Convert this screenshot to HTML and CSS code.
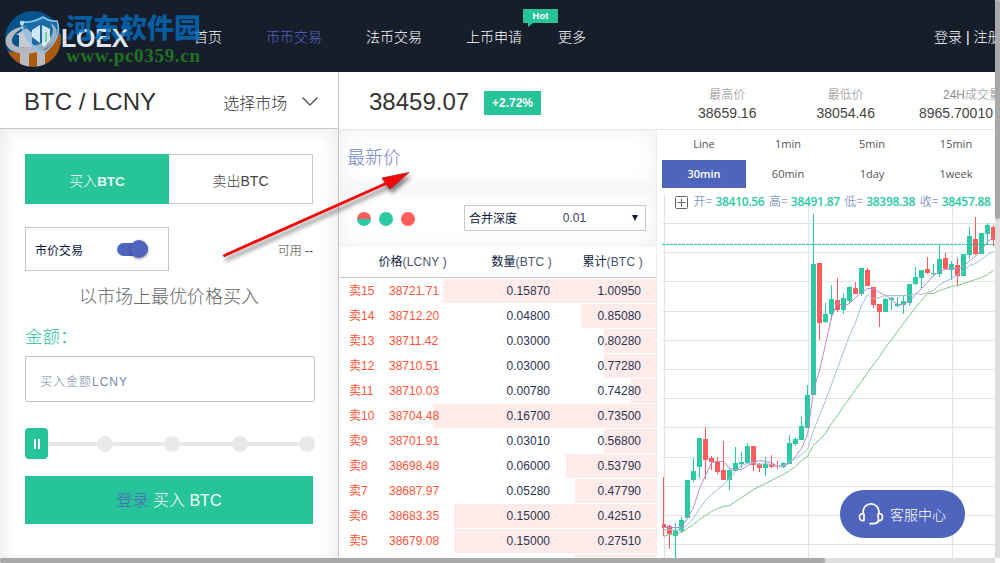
FILE: index.html
```html
<!DOCTYPE html>
<html lang="zh-CN">
<head>
    <meta charset="UTF-8">
    <meta name="viewport" content="width=device-width, initial-scale=1.0">
    <title>BTC / LCNY - LOEX</title>
    <link rel="stylesheet" href="styles.css">
</head>
<body>
    <header class="topbar">
        <div class="logo">
            <svg class="logo-mark" width="60" height="62" viewBox="0 0 60 62">
                <defs>
                    <clipPath id="disc"><circle cx="29" cy="33" r="28"/></clipPath>
                </defs>
                <g clip-path="url(#disc)">
                    <rect width="60" height="62" fill="#07538d"/>
                    <path d="M0 44 Q30 54 60 24 V62 H0 Z" fill="#ab5a10"/>
                    <path d="M16 44h9v18h-9zM33 44h8v18h-8z" fill="#b9bbc0"/>
                </g>
                <path d="M23 20 C6 21 -2 32 3 40 C9 50 30 50 42 42 C54 34 57 22 46 17 C52 24 48 32 40 36 C28 42 13 43 9 38 C5 32 13 24 23 20 Z" fill="#b4b8be"/>
                <path d="M12 29 L22 22 L31 29 H28 V41 H15 V29 Z" fill="#c6cbd2"/>
                <path d="M17 16 Q30 17 39 11 Q46 16 53 15 Q59 31 40 47 Q21 38 17 16 Z" fill="#4ba3df" fill-opacity=".3" stroke="#86c4f0" stroke-width="1.6"/>
                <circle cx="18" cy="17" r="2.200" fill="#b5ddf8"/>
                <path d="M28 24 L36 19 V37 L28 31 Z" fill="#e3f3ff" fill-opacity=".9"/>
                <path d="M38 19 L46 23 V34 L40 41 L38 39 Z" fill="#e3f3ff" fill-opacity=".9"/>
                <path d="M42 26 v10" stroke="#75cf9b" stroke-width="2"/>
            </svg>
            <span class="logo-name">LOEX</span>
            <div class="site-mark">
                <span class="site-name">河东软件园</span>
                <span class="site-url">www.pc0359.cn</span>
            </div>
        </div>
        <nav class="menu">
            <a class="menu-item">首页</a>
            <a class="menu-item active">币币交易</a>
            <a class="menu-item">法币交易</a>
            <a class="menu-item has-hot">上币申请<span class="hot">Hot</span></a>
            <a class="menu-item">更多</a>
        </nav>
        <div class="account">登录 | 注册</div>
    </header>

    <main class="page">
        <!-- Buy / sell form -->
        <section class="trade">
            <div class="pair">
                <span class="pair-name">BTC / LCNY</span>
                <span class="pair-pick">选择市场</span>
                <svg width="18" height="11" viewBox="0 0 18 11" fill="none" stroke="#555" stroke-width="1.4"><path d="M1.5 1.5 L9 9 L16.5 1.5"/></svg>
            </div>
            <div class="form">
                <div class="sides">
                    <button class="side buy">买入<b>BTC</b></button>
                    <button class="side sell">卖出BTC</button>
                </div>
                <div class="mode-row">
                    <div class="mode">市价交易<span class="switch"><i class="knob"></i></span></div>
                    <span class="available">可用 --</span>
                </div>
                <p class="hint">以市场上最优价格买入</p>
                <label class="amount-label">金额：</label>
                <input class="amount" type="text" placeholder="买入金额LCNY">
                <div class="slider">
                    <span class="handle"><i></i><i></i></span>
                    <span class="dot"></span>
                    <span class="dot"></span>
                    <span class="dot"></span>
                    <span class="dot"></span>
                </div>
                <button class="submit"><span class="login">登录</span> 买入 BTC</button>
            </div>
        </section>

        <div class="market">
            <div class="ticker">
                <span class="price">38459.07</span>
                <span class="change">+2.72%</span>
                <div class="stat"><span>最高价</span><b>38659.16</b></div>
                <div class="stat"><span>最低价</span><b>38054.46</b></div>
                <div class="stat volume"><span>24H成交量</span><b>8965.70010</b></div>
            </div>

            <div class="panels">
                <!-- Order book -->
                <section class="book">
                    <div class="latest">最新价</div>
                    <div class="tools">
                        <span class="view both"></span>
                        <span class="view bids"></span>
                        <span class="view asks"></span>
                        <div class="depth"><span>合并深度</span><span class="step">0.01</span><span class="caret"></span></div>
                    </div>
                    <div class="book-head">
                        <span>价格<em>(LCNY )</em></span>
                        <span>数量<em>(BTC )</em></span>
                        <span>累计<em>(BTC )</em></span>
                    </div>
                    <div class="rows" id="rows"></div>
                </section>

                <!-- Candles -->
                <section class="chart">
                    <div class="periods">
                        <span>Line</span><span>1min</span><span>5min</span><span>15min</span>
                        <span class="on">30min</span><span>60min</span><span>1day</span><span>1week</span>
                    </div>
                    <div class="plot">
                        <svg id="kline" width="338" height="368" viewBox="657 190 338 368"></svg>
                        <div class="ohlc">
                            <svg width="13" height="13" viewBox="0 0 13 13" fill="none" stroke="#666"><rect x=".5" y=".5" width="12" height="12" rx="1"/><path d="M6.5 2.5v8M2.5 6.5h8"/></svg>
                            <span>开= <b>38410.56</b></span>
                            <span>高= <b>38491.87</b></span>
                            <span>低= <b>38398.38</b></span>
                            <span>收= <b>38457.88</b></span>
                        </div>
                    </div>
                </section>
            </div>
        </div>
    </main>

    <svg class="pointer" width="200" height="104" viewBox="218 164 200 104">
        <path d="M224.500 255.500 L386 183.500" stroke="#f00a0a" stroke-width="3" stroke-linecap="round"/>
        <path d="M409 172.500 L390 189 L386 184 L382 178 Z" fill="#f00a0a" stroke="#a81818" stroke-width=".8"/>
    </svg>

    <button class="support">
        <svg width="26" height="22" viewBox="0 0 26 22" fill="none" stroke="#fff" stroke-width="1.700" stroke-linecap="round" stroke-linejoin="round"><path d="M5 11 C4 -2.500 22 -2.500 21 11"/><path d="M6 11 C2.500 10 1.500 12 1.500 14 C1.500 16.500 3 18 6 17.500 Z"/><path d="M20 11 C23.500 10 24.500 12 24.500 14 C24.500 16.500 23 18 20.500 17.500 Z"/><path d="M20.500 17.500 C20 19.800 18 20.600 15 20.600 H12"/></svg>
        客服中心
    </button>

    <div class="scroll-y"><i></i></div>
    <div class="scroll-x"><i></i></div>

    <script src="chart.js"></script>
</body>
</html>
```

FILE: styles.css
```css
* {
    box-sizing: border-box;
}

body {
    margin: 0;
    width: 1000px;
    height: 563px;
    overflow: hidden;
    position: relative;
    background-color: #fff;
    font-family: "Liberation Sans", "Noto Sans CJK SC", sans-serif;
    font-size: 12px;
    font-weight: 300;
    color: #333;
}

button {
    font-family: inherit;
    font-weight: 300;
    border: none;
    padding: 0;
}

/* Top bar */
.topbar {
    display: flex;
    align-items: center;
    height: 72px;
    padding-bottom: 1px;
    background-color: #161d2b;
    color: #fff;
    font-size: 14px;
    white-space: nowrap;
}

.logo {
    position: relative;
    width: 194px;
    height: 71px;
    padding: 6px 0 0 4px;
    flex: none;
}

.logo-name {
    position: absolute;
    left: 61px;
    top: 24px;
    font-size: 25px;
    line-height: 28px;
    font-weight: bold;
    color: #dce6ee;
    letter-spacing: -0.2px;
}

.site-mark {
    position: absolute;
    left: 66px;
    top: 11px;
    display: flex;
    flex-direction: column;
}

.site-name {
    font-family: "Noto Sans CJK SC", sans-serif;
    font-size: 27px;
    line-height: 32px;
    font-weight: 900;
    color: rgba(5, 105, 185, 0.85);
}

.site-url {
    font-family: "Liberation Serif", serif;
    font-size: 19px;
    line-height: 26px;
    font-weight: bold;
    color: #20741f;
    letter-spacing: 0.7px;
}

.menu {
    display: flex;
    gap: 44px;
}

.menu-item.active {
    color: #5468c4;
}

.has-hot {
    position: relative;
    margin-right: -8px;
}

.hot {
    position: absolute;
    left: 57px;
    top: -17px;
    width: 35px;
    height: 14px;
    border-radius: 1px;
    background-color: #27c399;
    font-size: 9.5px;
    font-weight: bold;
    line-height: 14px;
    text-align: center;
}

.hot::after {
    content: "";
    position: absolute;
    left: 5px;
    top: 14px;
    border-top: 4px solid #27c399;
    border-right: 5px solid transparent;
}

.account {
    margin-left: auto;
    width: 66px;
    flex: none;
}

.page {
    display: flex;
    height: 486px;
    width: 995px;
}

/* Form */
.trade {
    width: 339px;
    flex: none;
    border-right: 1px solid #c8c8c8;
}

.pair {
    display: flex;
    align-items: center;
    height: 57px;
    padding: 3px 19px 0 24px;
    border-bottom: 1px solid #c8c8c8;
}

.pair-name {
    font-size: 24px;
    width: 200px;
}

.pair-pick {
    font-size: 16px;
    width: 78px;
}

.form {
    height: 429px;
    padding: 25px;
    box-shadow: inset 0 10px 25px -12px #eaeaea, inset 14px 0 20px -12px #ececec, inset -14px 0 20px -12px #ececec;
}

.sides {
    display: flex;
    height: 50px;
}

.side {
    width: 144px;
    padding-top: 2px;
    font-size: 14px;
}

.buy {
    background-color: #27c399;
    color: #fff;
}

.buy b {
    font-size: 13.5px;
    font-weight: bold;
    color: #e4f9f2;
}

.sell {
    background-color: #fff;
    border: 1px solid #c8c8c8;
    border-left: none;
    color: #444;
}

.mode-row {
    display: flex;
    align-items: center;
    justify-content: space-between;
    width: 288px;
    height: 44px;
    margin-top: 23px;
}

.mode {
    display: flex;
    align-items: center;
    justify-content: space-between;
    width: 144px;
    height: 44px;
    padding: 0 20px 0 9px;
    border: 1px solid #c8c8c8;
    background-color: #fff;
    font-weight: 400;
    color: #0d1b3e;
}

.switch {
    display: flex;
    align-items: center;
    justify-content: flex-end;
    width: 31px;
    height: 13px;
    border-radius: 7px;
    background-color: #4f64bd;
}

.knob {
    flex: none;
    width: 18px;
    height: 18px;
    border-radius: 50%;
    background-color: #4f64bd;
    box-shadow: 0 1px 3px rgba(0, 0, 0, 0.4);
}

.available {
    color: #444;
}

.hint {
    width: 288px;
    margin: 13px 0 0;
    font-size: 18px;
    line-height: 27px;
    text-align: center;
    color: #666;
}

.amount-label {
    display: block;
    margin-top: 13px;
    font-size: 17.5px;
    line-height: 26px;
    color: #27c399;
}

.amount {
    display: block;
    width: 290px;
    height: 46px;
    margin-top: 6px;
    padding: 5px 14px 0;
    border: 1px solid #c4c4c4;
    border-radius: 2px;
    background-color: #fff;
    font: 300 12px "Liberation Sans", "Noto Sans CJK SC", sans-serif;
    letter-spacing: 1px;
}

.amount::placeholder {
    color: #7488a5;
}

.slider {
    display: flex;
    align-items: center;
    justify-content: space-between;
    width: 290px;
    height: 31px;
    margin-top: 26px;
    background: linear-gradient(#e9e9e9, #e9e9e9) 0 14px / 282px 4px no-repeat;
}

.handle {
    display: flex;
    align-items: center;
    justify-content: center;
    gap: 2px;
    width: 23px;
    height: 31px;
    margin-right: -3px;
    border-radius: 4px;
    background-color: #27c399;
}

.handle i {
    width: 2px;
    height: 10px;
    background-color: #fff;
}

.dot {
    width: 16px;
    height: 16px;
    border-radius: 50%;
    background-color: #e9e9e9;
}

.submit {
    width: 288px;
    height: 48px;
    margin-top: 17px;
    padding-bottom: 2px;
    background-color: #27c399;
    color: #fff;
    font-size: 16px;
}

.login {
    color: #4f64bd;
}

/* Ticker */
.market {
    width: 656px;
    flex: none;
}

.ticker {
    display: flex;
    align-items: center;
    height: 58px;
    padding: 3px 0 0 30px;
    border-bottom: 1px solid #e6e6e6;
    overflow: hidden;
}

.price {
    width: 115px;
    flex: none;
    font-size: 24px;
}

.change {
    width: 57px;
    height: 24px;
    flex: none;
    margin: 1px 127px 0 0;
    background-color: #27c399;
    color: #fff;
    font-weight: bold;
    line-height: 24px;
    text-align: center;
}

.stat {
    display: flex;
    flex-direction: column;
    align-items: center;
    flex: none;
    width: 118.5px;
    padding-top: 3px;
    line-height: 18px;
    white-space: nowrap;
    color: #888;
}

.stat b {
    font-size: 14px;
    font-weight: normal;
    color: #444;
}

.volume {
    align-items: flex-start;
    padding-left: 14px;
}

.volume span {
    padding-left: 24px;
}

.panels {
    display: flex;
    height: 428px;
}

/* Order book */
.book {
    width: 318px;
    flex: none;
    border-right: 1px solid #eee;
    overflow: hidden;
}

.latest {
    height: 58px;
    padding-left: 8px;
    font-size: 18px;
    line-height: 56px;
    color: #7485cb;
    box-shadow: inset 0 0 22px #efefef;
}

.tools {
    display: flex;
    align-items: center;
    gap: 8px;
    height: 59px;
    padding: 0 10px 0 18px;
    box-shadow: inset 0 0 22px #efefef;
}

.view {
    width: 14px;
    height: 14px;
    margin-top: 2px;
    border-radius: 50%;
}

.both {
    background: linear-gradient(#ff5c5c 50%, #2bcaa5 50%);
}

.bids {
    background-color: #2bcaa5;
}

.asks {
    background-color: #ff5c5c;
}

.depth {
    display: flex;
    align-items: center;
    justify-content: space-between;
    width: 182px;
    height: 26px;
    margin-left: auto;
    padding: 0 7px 0 4px;
    border: 1px solid #c8c8c8;
    background-color: #fff;
    font-weight: 400;
    color: #0d1b3e;
}

.step {
    color: #3a4560;
}

.caret {
    border: 3px solid transparent;
    border-top: 6px solid #0d1b3e;
    border-bottom: none;
}

.book-head {
    display: grid;
    grid-template-columns: 98px 105px 91px;
    height: 31px;
    padding-left: 10px;
    border-bottom: 1px solid #c8c8c8;
    font-weight: 400;
    line-height: 31px;
    text-align: right;
    color: #0d1b3e;
}

.book-head em {
    font-style: normal;
    letter-spacing: 0.2px;
    color: #4c556c;
}

.rows {
    padding-top: 1px;
}

.row {
    display: grid;
    grid-template-columns: 40px 70px 91px 91px;
    height: 24px;
    margin-bottom: 1px;
    padding-left: 10px;
    background: linear-gradient(#ffecea, #ffecea) right / var(--bar) 100% no-repeat;
    line-height: 24px;
    text-align: right;
    color: #2a3553;
}

.ask {
    font-weight: 400;
    color: #ff5436;
    text-align: left;
}

/* Chart */
.chart {
    width: 338px;
    flex: none;
    overflow: hidden;
}

.periods {
    display: grid;
    grid-template-columns: repeat(4, 84px);
    grid-template-rows: 30px 28px;
    height: 60px;
    padding-left: 5px;
    font-family: "Open Sans", sans-serif;
    font-size: 11px;
    font-weight: 400;
    line-height: 27px;
    text-align: center;
    color: #555;
}

.periods .on {
    background-color: #4f64bd;
    color: #fff;
    font-weight: 600;
}

.plot {
    position: relative;
}

.ohlc {
    position: absolute;
    left: 18px;
    top: 4px;
    display: flex;
    align-items: center;
    gap: 4.5px;
    font-family: "Open Sans", "Noto Sans CJK SC", sans-serif;
    line-height: 16px;
    white-space: nowrap;
    color: #4f6fb0;
}

.ohlc svg {
    margin-right: 1px;
}

.ohlc b {
    font-weight: 600;
    letter-spacing: -0.3px;
    color: #2bcaa5;
}

.grid {
    stroke: #dfe6e9;
}

.last {
    stroke: #27c399;
    stroke-dasharray: 3 1;
}

.up {
    fill: #2bcaa5;
}

.down {
    fill: #ff5c5c;
}

.ma {
    fill: none;
    stroke-width: 1;
}

.ma-fast {
    stroke: #b58cd0;
}

.ma-mid {
    stroke: #a3bfe0;
}

.ma-slow {
    stroke: #7cc585;
}

/* Overlays */
.pointer {
    position: absolute;
    left: 218px;
    top: 164px;
    filter: drop-shadow(2px 4px 2px rgba(0, 0, 0, 0.5));
}

.support {
    position: absolute;
    left: 840px;
    top: 490px;
    display: flex;
    align-items: center;
    gap: 6px;
    width: 125px;
    height: 48px;
    padding-left: 18px;
    border-radius: 24px;
    background-color: #4f64bd;
    color: #fff;
    font-size: 14px;
}

.scroll-y,
.scroll-x {
    position: absolute;
    background-color: #dedede;
}

.scroll-y {
    right: 0;
    top: 0;
    width: 5px;
    height: 558px;
}

.scroll-x {
    left: 0;
    bottom: 0;
    width: 995px;
    height: 5px;
}

.scroll-y i,
.scroll-x i {
    display: block;
    border-radius: 2px;
    background-color: #a9a9a9;
}

.scroll-y i {
    height: 219px;
}

.scroll-x i {
    width: 825px;
    height: 5px;
}
```

FILE: chart.js
```js
// label, price, amount, total, bar width
const asks = [
    ['15', '38721.71', '0.15870', '1.00950', 213],
    ['14', '38712.20', '0.04800', '0.85080', 75],
    ['13', '38711.42', '0.03000', '0.80280', 52],
    ['12', '38710.51', '0.03000', '0.77280', 52],
    ['11', '38710.03', '0.00780', '0.74280', 25],
    ['10', '38704.48', '0.16700', '0.73500', 223],
    ['9', '38701.91', '0.03010', '0.56800', 52],
    ['8', '38698.48', '0.06000', '0.53790', 90],
    ['7', '38687.97', '0.05280', '0.47790', 81],
    ['6', '38683.35', '0.15000', '0.42510', 202],
    ['5', '38679.08', '0.15000', '0.27510', 202]
];

let rows = '';
for (const [n, price, amount, total, bar] of asks) {
    rows += `<div class="row" style="--bar: ${bar}px"><span class="ask">卖${n}</span><span class="ask">${price}</span><span>${amount}</span><span>${total}</span></div>`;
}
rows += '<div class="row" style="--bar: 81px"></div>';
document.getElementById('rows').innerHTML = rows;

// direction, body top, body bottom, high, low
const candles = [
    ['down', 524, 528, 477, 536], ['down', 526, 534, 525, 549], ['up', 530, 536, 523, 558], ['up', 520, 531, 517, 533],
    ['up', 480, 518, 480, 518], ['up', 471, 480, 458, 482], ['up', 438, 467, 438, 478], ['down', 439, 460, 427, 479],
    ['down', 458, 462, 456, 470], ['down', 461, 472, 457, 474], ['down', 470, 480, 441, 480], ['up', 470, 480, 468, 490],
    ['up', 463, 471, 447, 471], ['up', 462, 464, 452, 468], ['up', 446, 463, 443, 463], ['down', 446, 465, 446, 471],
    ['down', 464, 468, 463, 472], ['up', 464, 468, 457, 476], ['down', 464, 467, 455, 468], ['down', 466, 467, 461, 469],
    ['up', 463, 467, 462, 468], ['up', 443, 464, 435, 464], ['up', 439, 444, 437, 446], ['up', 426, 440, 417, 440],
    ['up', 395, 428, 385, 428], ['up', 264, 395, 214, 395], ['down', 263, 323, 263, 340], ['up', 314, 322, 303, 323],
    ['up', 299, 314, 285, 320], ['down', 300, 310, 278, 312], ['up', 298, 310, 293, 314], ['up', 287, 301, 286, 303],
    ['down', 288, 294, 282, 294], ['up', 268, 294, 268, 296], ['down', 270, 286, 268, 286], ['down', 287, 305, 287, 308],
    ['down', 304, 312, 304, 327], ['up', 299, 312, 298, 312], ['up', 298, 300, 297, 310], ['up', 304, 306, 297, 307],
    ['up', 301, 305, 296, 314], ['up', 284, 303, 284, 306], ['up', 277, 284, 267, 285], ['up', 270, 278, 270, 288],
    ['down', 269, 273, 257, 274], ['up', 273, 274, 264, 276], ['up', 259, 274, 245, 277], ['down', 258, 269, 253, 269],
    ['up', 264, 270, 261, 280], ['down', 265, 276, 258, 286], ['up', 254, 276, 254, 276], ['up', 236, 255, 227, 259],
    ['down', 239, 254, 217, 255], ['up', 233, 254, 233, 254], ['up', 225, 234, 223, 245], ['down', 227, 240, 225, 246]
];

const averages = {
    fast: [527, 527, 527, 527, 518, 507, 488, 475, 462, 461, 461, 468, 469, 469, 465, 462, 460, 461, 462, 466, 465, 463, 456, 448, 434, 390, 370, 344, 317, 302, 306, 303, 297, 292, 288, 288, 292, 295, 299, 304, 304, 301, 294, 288, 282, 275, 271, 269, 268, 268, 266, 260, 256, 250, 241, 237],
    mid: [529, 529, 530, 529, 524, 518, 508, 500, 494, 489, 484, 478, 471, 465, 463, 462, 464, 463, 464, 466, 465, 461, 458, 454, 449, 430, 415, 400, 384, 368, 351, 335, 322, 305, 294, 298, 297, 295, 295, 295, 295, 295, 293, 294, 292, 290, 284, 281, 278, 274, 271, 265, 263, 259, 254, 251],
    slow: [536, 534, 533, 532, 528, 524, 519, 515, 511, 508, 506, 505, 501, 497, 493, 489, 486, 483, 480, 477, 474, 470, 466, 460, 456, 445, 439, 433, 423, 415, 406, 398, 389, 381, 372, 364, 356, 347, 339, 331, 323, 315, 307, 300, 293, 293, 290, 288, 286, 285, 283, 281, 279, 277, 274, 270]
};

const x = i => 663.5 + i * 6;
let svg = '';

for (const y of [223, 252, 281, 311, 340, 369, 398, 427, 457, 486, 515, 544]) {
    svg += `<path class="grid" d="M662 ${y + 0.5}H995"/>`;
}
for (const gx of [664.5, 808.5, 952.5]) {
    svg += `<path class="grid" d="M${gx} 195V558"/>`;
}

candles.forEach(([dir, top, bottom, high, low], i) => {
    const left = Math.max(x(i) - 2.5, 662);
    svg += `<rect class="${dir}" x="${x(i) - 0.5}" y="${high}" width="1" height="${low - high}"/>`;
    svg += `<rect class="${dir}" x="${left}" y="${top}" width="${x(i) + 2.5 - left}" height="${bottom - top}"/>`;
});

for (const name in averages) {
    const points = averages[name].map((y, i) => `${x(i)},${y + 0.5}`).join(' ');
    svg += `<polyline class="ma ma-${name}" points="${points}"/>`;
}
svg += '<path class="last" d="M662 244.500H995"/>';

document.getElementById('kline').innerHTML = svg;
```
